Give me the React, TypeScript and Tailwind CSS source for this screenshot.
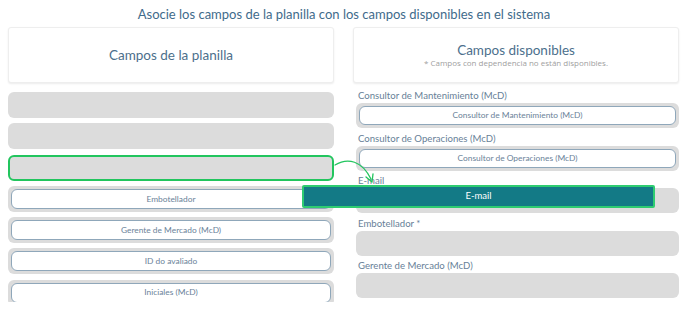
const leftRows: { label?: string; active?: boolean }[] = [
  {},
  {},
  { active: true },
  { label: 'Embotellador' },
  { label: 'Gerente de Mercado (McD)' },
  { label: 'ID do avaliado' },
  { label: 'Iniciales (McD)' },
];

const rightFields: { label: string; value?: string }[] = [
  { label: 'Consultor de Mantenimiento (McD)', value: 'Consultor de Mantenimiento (McD)' },
  { label: 'Consultor de Operaciones (McD)', value: 'Consultor de Operaciones (McD)' },
  { label: 'E-mail' },
  { label: 'Embotellador *' },
  { label: 'Gerente de Mercado (McD)' },
];

function Chip({ text }: { text: string }) {
  return (
    <div className="h-full rounded-md border border-[#8fa7ba] bg-white flex items-center justify-center text-[8.4px] text-[#6a8299]">
      {text}
    </div>
  );
}

export default function App() {
  return (
    <div className="relative w-[688px] h-[313px] bg-white overflow-hidden" style={{ fontFamily: 'Lato, "Open Sans", sans-serif' }}>
      <h1 className="h-[27px] pt-[5px] text-center text-[13px] leading-[18px] text-[#3f6b8b]">
        Asocie los campos de la planilla con los campos disponibles en el sistema
      </h1>

      <div className="grid grid-cols-[326px_326px] gap-x-[19px] pl-2">
        {/* Left column */}
        <div className="flex flex-col">
          <div className="h-[56px] rounded-[3px] bg-white border border-[#eeeeee] shadow-[0_1px_2px_rgba(0,0,0,0.08)] flex items-center justify-center text-[13.5px] text-[#4c6f8c]">
            Campos de la planilla
          </div>
          <div className="mt-[9px] h-[210px] overflow-hidden flex flex-col gap-[5.3px]">
            {leftRows.map((r, i) => (
              <div
                key={i}
                className={`h-[26px] shrink-0 rounded-md bg-[#dcdcdc] p-[3px] ${r.active ? 'border-2 border-[#22c55e] rounded-[3px]' : ''}`}
              >
                {r.label && <Chip text={r.label} />}
              </div>
            ))}
          </div>
        </div>

        {/* Right column */}
        <div className="flex flex-col">
          <div className="h-[56px] rounded-[3px] bg-white border border-[#eeeeee] shadow-[0_1px_2px_rgba(0,0,0,0.08)] flex flex-col items-center justify-center">
            <div className="text-[13.5px] leading-[15px] text-[#4c6f8c]">Campos disponibles</div>
            <div className="text-[8px] leading-[10px] text-[#a0a0a0]" style={{ fontFamily: '"Open Sans", sans-serif' }}>
              * Campos con dependencia no están disponibles.
            </div>
          </div>
          <div className="mt-[6px] flex flex-col gap-[3.5px]">
            {rightFields.map((f, i) => (
              <div key={i} className="flex flex-col pl-[3px]">
                <div className="h-[14px] pl-[2px] text-[9.6px] leading-[14px] text-[#687f98]">{f.label}</div>
                <div className="h-[25px] rounded-md bg-[#dcdcdc] p-[3px]">
                  {f.value && <Chip text={f.value} />}
                </div>
              </div>
            ))}
          </div>
        </div>
      </div>

      {/* Drag arrow */}
      <svg className="absolute left-[330px] top-[155px] w-[50px] h-[32px]" viewBox="0 0 50 32" fill="none">
        <path d="M5 10 C 18 2, 32 6, 41 24" stroke="#22c55e" strokeWidth="1.3" strokeLinecap="round" />
        <path d="M36 22 L 42 27 L 43 19" stroke="#22c55e" strokeWidth="1.3" strokeLinecap="round" strokeLinejoin="round" />
      </svg>

      {/* Dragged item */}
      <div className="absolute left-[302px] top-[185px] w-[353px] h-[23px] rounded-[2px] border-2 border-[#2ecc71] bg-[#137a86] flex items-center justify-center text-[9.5px] text-white">
        E-mail
      </div>
    </div>
  );
}
